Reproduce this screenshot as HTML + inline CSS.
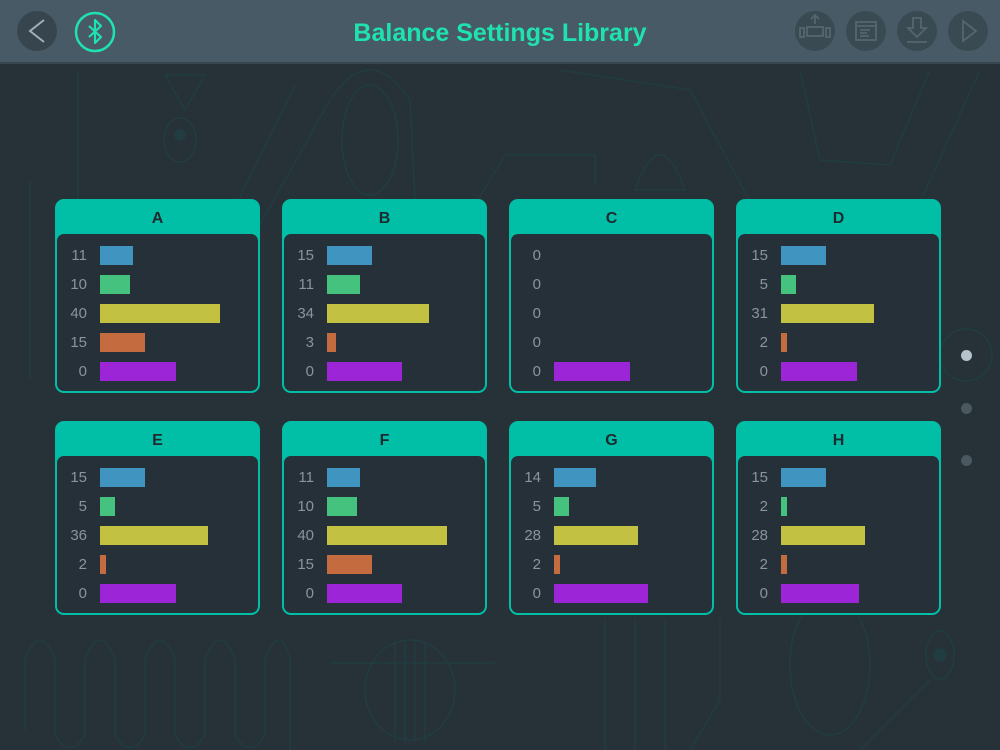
<!DOCTYPE html>
<html><head><meta charset="utf-8"><style>
*{margin:0;padding:0;box-sizing:border-box}
body{width:1000px;height:750px;overflow:hidden;background:#263138;font-family:"Liberation Sans",sans-serif;position:relative}
.hdr{position:absolute;left:0;top:0;width:1000px;height:64px;background:#485a65;border-bottom:2px solid #37464f}
.title{position:absolute;left:0;width:1000px;top:19px;text-align:center;color:#1ee3b0;font-weight:bold;font-size:25px}
.card{position:absolute;width:205px;height:194px;background:#00bfa6;border-radius:9px}
.card h3{position:absolute;left:0;top:11px;width:100%;text-align:center;font-size:16px;color:#1d2a30;font-weight:bold}
.inner{position:absolute;left:2px;top:35px;width:201px;height:157px;background:#263038;border-radius:7px}
.row{position:absolute;left:0;height:19px}
.num{position:absolute;left:0;width:30px;text-align:right;color:#8895a0;font-size:15px;top:1px}
.bar{position:absolute;left:43px;top:0;height:19px}
.dot{position:absolute;width:11px;height:11px;border-radius:50%;left:961px}
</style></head><body>
<svg width="1000" height="750" style="position:absolute;left:0;top:0" fill="none" stroke="#213d41" stroke-width="1.5">
<path d="M78 70 L78 230 M30 180 L30 380"/>
<ellipse cx="180" cy="140" rx="16" ry="22"/><circle cx="180" cy="135" r="5" fill="#213d41"/>
<path d="M165 75 L205 75 L185 110 Z"/>
<path d="M295 85 L180 320"/>
<ellipse cx="370" cy="140" rx="28" ry="55"/><path d="M240 260 L330 100 Q370 40 410 100 L415 200 L360 320"/>
<path d="M460 230 L505 155 L595 155 L595 185"/>
<path d="M635 190 Q660 120 685 190 Z"/><path d="M632 205h55M632 222h55M632 238h55"/>
<path d="M560 70 L690 90 L760 220 L910 225 L980 70"/>
<path d="M800 70 L820 160 L890 165 L930 70"/>
<path d="M25 730 L25 660 Q40 620 55 660 L55 735 Q70 760 85 735 L85 660 Q100 620 115 660 L115 735 Q130 760 145 735 L145 660 Q160 620 175 660 L175 735 Q190 760 205 735 L205 660 Q220 620 235 660 L235 735 Q250 760 265 735 L265 660 Q280 620 290 660 L290 750"/>
<path d="M330 663 L495 663"/><ellipse cx="410" cy="690" rx="45" ry="50"/><path d="M395 642v100M405 642v100M415 642v100M425 642v100"/>
<path d="M605 620 L605 750 M635 620 L635 750 M665 620 L665 750 M720 620 L720 700 L690 750"/>
<ellipse cx="830" cy="665" rx="40" ry="70"/><ellipse cx="940" cy="655" rx="14" ry="24"/>
<circle cx="940" cy="655" r="6" fill="#213d41"/><path d="M930 680 L860 750"/>
<circle cx="966" cy="355" r="26"/>
</svg>
<div class="hdr">
<svg width="1000" height="64" style="position:absolute;left:0;top:0">
<circle cx="37" cy="31" r="20" fill="#37454e"/>
<path d="M44 20 L30 31 L44 42" stroke="#9fb0ba" stroke-width="2" fill="none"/>
<circle cx="95" cy="32" r="19" fill="none" stroke="#1ee3b0" stroke-width="2.5"/>
<path d="M89 26 L101 37 L95 43 L95 20 L101 26 L89 37" stroke="#1ee3b0" stroke-width="2.2" fill="none" stroke-linejoin="round"/>
<g fill="#3a4a53"><circle cx="815" cy="31" r="20"/><circle cx="866" cy="31" r="20"/><circle cx="917" cy="31" r="20"/><circle cx="968" cy="31" r="20"/></g>
<g stroke="#56666f" stroke-width="1.8" fill="none">
<rect x="807" y="27" width="16" height="9"/><rect x="800" y="28" width="4" height="9"/><rect x="826" y="28" width="4" height="9"/><path d="M815 24v-8M811 19l4-4 4 4"/>
<rect x="856" y="22" width="20" height="18"/><path d="M856 26h20M860 30h10M860 33h7M860 36h9"/>
<path d="M913 18h8v10h5l-9 9-9-9h5z M907 42h20"/>
<path d="M963 21 L976 31 L963 41 Z"/></g>
</svg>
<div class="title">Balance Settings Library</div>
</div>
<div id="cards"></div>
<div class="dot" style="top:350px;background:#b5c3cb"></div>
<div class="dot" style="top:403px;background:#4a5860"></div>
<div class="dot" style="top:455px;background:#4a5860"></div>
<script>
var D=[["A",55,199,[[11,33],[10,30],[40,120],[15,45],[0,76]]],
["B",282,199,[[15,45],[11,33],[34,102],[3,9],[0,75]]],
["C",509,199,[[0,0],[0,0],[0,0],[0,0],[0,76]]],
["D",736,199,[[15,45],[5,15],[31,93],[2,6],[0,76]]],
["E",55,421,[[15,45],[5,15],[36,108],[2,6],[0,76]]],
["F",282,421,[[11,33],[10,30],[40,120],[15,45],[0,75]]],
["G",509,421,[[14,42],[5,15],[28,84],[2,6],[0,94]]],
["H",736,421,[[15,45],[2,6],[28,84],[2,6],[0,78]]]];
var C=["#3f94c0","#45c37e","#c3c142","#c46b40","#9d25d8"];
var h="";
D.forEach(function(d){h+='<div class="card" style="left:'+d[1]+'px;top:'+d[2]+'px"><h3>'+d[0]+'</h3><div class="inner">';
d[3].forEach(function(r,i){h+='<div class="row" style="top:'+(12+i*29)+'px;width:200px"><div class="num">'+r[0]+'</div>'+(r[1]?'<div class="bar" style="width:'+r[1]+'px;background:'+C[i]+'"></div>':'')+'</div>';});
h+='</div></div>';});
document.getElementById("cards").innerHTML=h;
</script>
</body></html>
